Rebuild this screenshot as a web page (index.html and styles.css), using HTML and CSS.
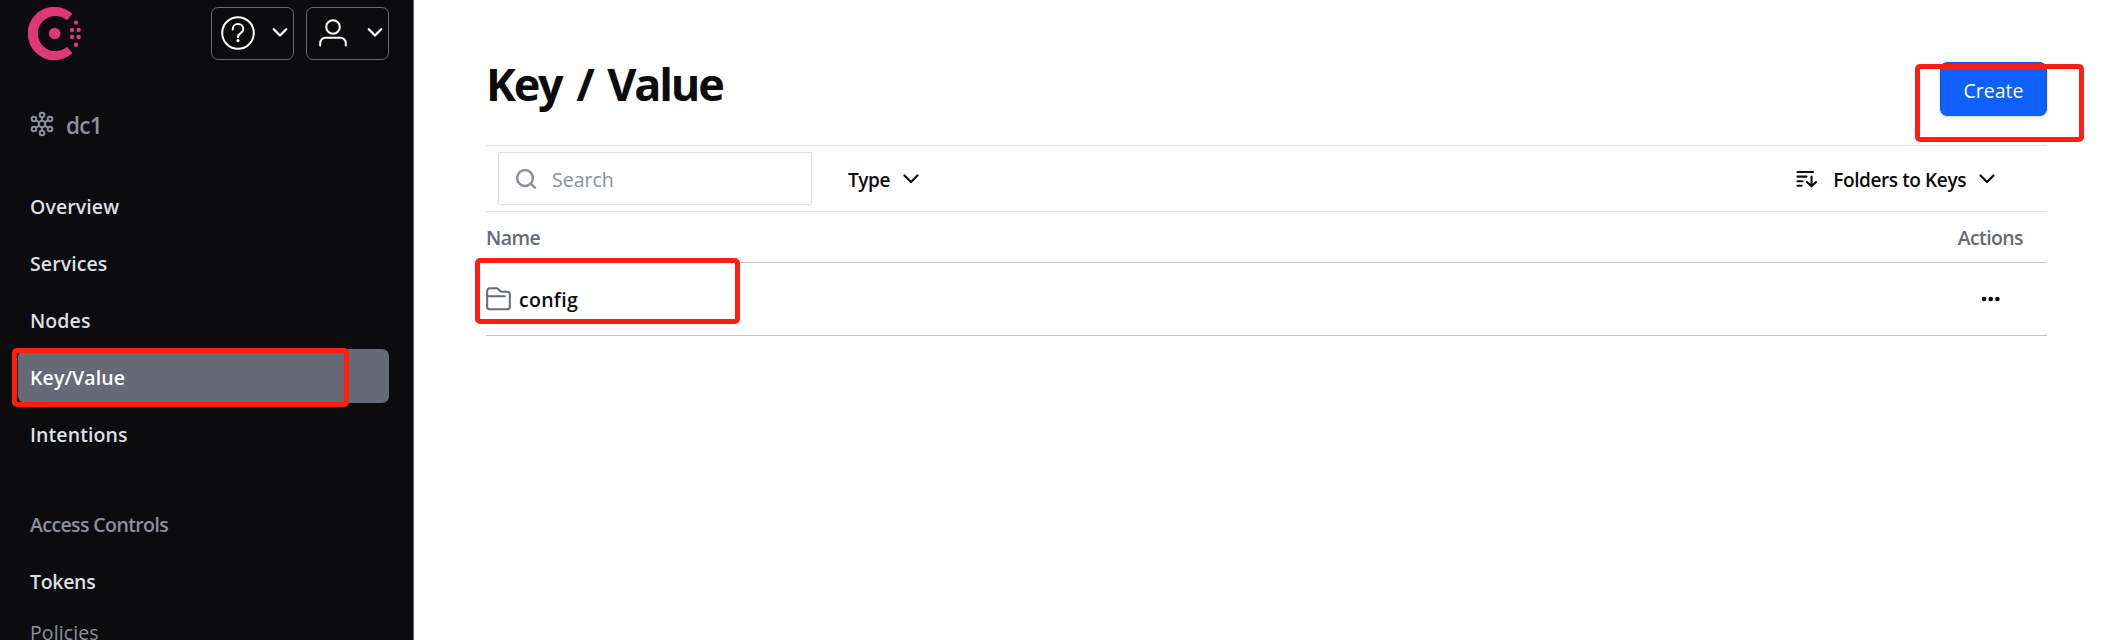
FILE: index.html
```
<!DOCTYPE html>
<html lang="en">
<head>
    <meta charset="UTF-8">
    <meta name="viewport" content="width=device-width, initial-scale=1.0">
    <title>Key / Value - Consul</title>
    <link rel="stylesheet" href="styles.css">
</head>
<body>
    <aside class="sidebar">
        <header class="top">
            <svg class="logo" width="54" height="54" viewBox="0 0 54 54" fill="#e03875">
                <path d="M44.3 6.7A26.7 26.7 0 1 0 44.3 46.3L39 39.8A17.6 17.6 0 1 1 39 13.2Z"/>
                <circle cx="26.7" cy="26.5" r="5.8"/>
                <circle cx="48" cy="15.6" r="2.2"/>
                <circle cx="44" cy="23" r="2.2"/>
                <circle cx="50.6" cy="23" r="2.2"/>
                <circle cx="44" cy="30" r="2.2"/>
                <circle cx="50.6" cy="30" r="2.2"/>
                <circle cx="48" cy="37.8" r="2.2"/>
            </svg>
            <div class="top-buttons">
                <button class="top-btn">
                    <svg width="81" height="51" viewBox="0 0 81 51" fill="none" stroke="#fff" stroke-width="2" stroke-linecap="round" stroke-linejoin="round">
                        <circle cx="26" cy="25" r="15.8"/>
                        <path d="M20.7 21.5c0-3 2.2-5.4 5.3-5.4s5.3 2.1 5.3 4.9c0 4.4-5.3 3.9-5.3 8.2"/>
                        <circle cx="26" cy="32.6" r="1.6" fill="#fff" stroke="none"/>
                        <path d="M61.8 21.3l6.2 6.2 6.2-6.2" stroke-width="2.3"/>
                    </svg>
                </button>
                <button class="top-btn">
                    <svg width="81" height="51" viewBox="0 0 81 51" fill="none" stroke="#fff" stroke-width="2" stroke-linecap="round" stroke-linejoin="round">
                        <circle cx="26" cy="19" r="6.8"/>
                        <path d="M13.2 37.5v-2.3a5.5 5.5 0 0 1 5.5-5.5h14.6a5.5 5.5 0 0 1 5.5 5.5v2.3"/>
                        <path d="M61.8 21.3l6.2 6.2 6.2-6.2" stroke-width="2.3"/>
                    </svg>
                </button>
            </div>
        </header>

        <div class="dc">
            <svg width="24" height="26" viewBox="0 0 24 26" fill="none" stroke="#8c909c" stroke-width="2">
                <circle cx="12" cy="13" r="3.3"/>
                <circle cx="12" cy="4" r="2.3"/>
                <circle cx="12" cy="22" r="2.3"/>
                <circle cx="4" cy="8" r="2.3"/>
                <circle cx="20" cy="8" r="2.3"/>
                <circle cx="4" cy="18" r="2.3"/>
                <circle cx="20" cy="18" r="2.3"/>
                <path d="M12 6.3v3.4M12 16.3v3.4M6 9.3l3 1.9M18 9.3l-3 1.9M6 16.7l3-1.9M18 16.7l-3-1.9"/>
            </svg>
            <span>dc1</span>
        </div>

        <ul class="nav">
            <li><a href="#">Overview</a></li>
            <li><a href="#">Services</a></li>
            <li><a href="#">Nodes</a></li>
            <li class="active"><a href="#">Key/Value</a></li>
            <li><a href="#">Intentions</a></li>
        </ul>
        <ul class="nav access">
            <li class="nav-title">Access Controls</li>
            <li class="tokens"><a href="#">Tokens</a></li>
            <li class="disabled">Policies</li>
        </ul>
        <div class="mark mark-nav"></div>
    </aside>

    <main class="content">
        <div class="heading">
            <h1>Key / Value</h1>
            <button class="create">Create</button>
        </div>

        <div class="filters">
            <div class="search">
                <svg width="22" height="22" viewBox="0 0 22 22" fill="none" stroke="#8c909c" stroke-width="2.5" stroke-linecap="round">
                    <circle cx="10" cy="10" r="7.9"/>
                    <path d="M15.7 15.7l4.3 4"/>
                </svg>
                <span>Search</span>
            </div>
            <div class="menu">
                <span>Type</span>
                <svg width="16" height="10" viewBox="0 0 16 10" fill="none" stroke="#0c0c0e" stroke-width="2.2" stroke-linecap="round" stroke-linejoin="round">
                    <path d="M1.5 1.5L8 8l6.5-6.5"/>
                </svg>
            </div>
            <div class="menu sort">
                <svg class="sort-icon" width="22" height="18" viewBox="0 0 22 18" fill="none" stroke="#0c0c0e" stroke-width="2.1" stroke-linecap="round" stroke-linejoin="round">
                    <path d="M1.5 2h15.5M1.5 6.6h9M1.5 11.2h5M1.5 15.8h4M15.5 6.5v9.5M10.9 12l4.6 4.3 4.6-4.3"/>
                </svg>
                <span>Folders to Keys</span>
                <svg width="16" height="10" viewBox="0 0 16 10" fill="none" stroke="#0c0c0e" stroke-width="2.2" stroke-linecap="round" stroke-linejoin="round">
                    <path d="M1.5 1.5L8 8l6.5-6.5"/>
                </svg>
            </div>
        </div>

        <div class="row row-head">
            <span>Name</span>
            <span>Actions</span>
        </div>
        <div class="row">
            <a class="key" href="#">
                <svg width="26" height="24" viewBox="0 0 26 24" fill="none" stroke="#656a76" stroke-width="2" stroke-linecap="round" stroke-linejoin="round">
                    <path d="M1.2 20V3.8a2.5 2.5 0 0 1 2.5-2.5h6.6a3 3 0 0 1 2.3 1l1.3 1.4a3 3 0 0 0 2.2 1h5.2a2.5 2.5 0 0 1 2.5 2.5V20a2.3 2.3 0 0 1-2.3 2.3h-18A2.3 2.3 0 0 1 1.2 20z"/>
                    <path d="M1.2 9.2h17.8"/>
                </svg>
                <span>config</span>
            </a>
            <svg class="dots" width="20" height="6" viewBox="0 0 20 6" fill="#0c0c0e">
                <circle cx="3" cy="3" r="2.3"/>
                <circle cx="9.7" cy="3" r="2.3"/>
                <circle cx="16.4" cy="3" r="2.3"/>
            </svg>
        </div>
        <div class="mark mark-create"></div>
        <div class="mark mark-config"></div>
    </main>
</body>
</html>
```
FILE: styles.css
```
* {
    box-sizing: border-box;
}

body {
    margin: 0;
    height: 640px;
    display: flex;
    overflow: hidden;
    background: #fff;
    color: #0c0c0e;
    font-family: "Open Sans", "Noto Sans", sans-serif;
    font-size: 19.5px;
    line-height: 28px;
}

svg {
    display: block;
    flex: none;
}

button {
    font: inherit;
    padding: 0;
    cursor: pointer;
}

a {
    color: inherit;
    text-decoration: none;
}

/* sidebar */
.sidebar {
    width: 414px;
    flex: none;
    padding: 7px 24px 0 18px;
    background: #0c0c0e;
    border-right: 1px solid #656a76;
}

.top {
    display: flex;
    justify-content: space-between;
    padding-left: 10px;
}

.top-buttons {
    display: flex;
    gap: 12px;
}

.top-btn {
    width: 83px;
    height: 53px;
    border: 1px solid #656a76;
    border-radius: 7px;
    background: transparent;
}

.dc {
    display: flex;
    align-items: center;
    gap: 12px;
    height: 30px;
    margin: 49px 0 38px;
    padding-left: 12px;
    color: #8c909c;
    font-size: 22.5px;
    font-weight: 600;
    letter-spacing: -0.7px;
}

.dc svg {
    margin-top: -3px;
}

.dc span {
    padding-top: 1px;
}

.nav {
    list-style: none;
    margin: 0;
    padding: 0;
    display: flex;
    flex-direction: column;
    gap: 3px;
    color: #dedfe3;
    font-weight: 600;
    letter-spacing: 0.1px;
}

.nav li {
    height: 54px;
    padding: 14.6px 12px 0;
    border-radius: 7px;
}

.nav .active {
    background: #656a76;
    color: #fff;
}

.access {
    margin-top: 37px;
}

.nav .nav-title {
    padding-top: 13.5px;
    color: #8c909c;
    letter-spacing: -0.6px;
}

.nav .tokens {
    padding-top: 14px;
    letter-spacing: -0.3px;
}

.nav .disabled {
    padding-top: 8px;
    color: #8c909c;
    font-weight: 400;
}

/* main */
.content {
    width: 1633px;
    padding: 62px 0 0 72px;
}

.heading {
    display: flex;
    justify-content: space-between;
    height: 83px;
}

h1 {
    margin: -8px 0 0;
    font-size: 45px;
    line-height: 60px;
    font-weight: 700;
    letter-spacing: -2.2px;
    word-spacing: 5.2px;
}

.create {
    width: 107px;
    height: 54px;
    padding-top: 3px;
    border: 1px solid #0c56e9;
    border-radius: 7px;
    background: #1060ff;
    box-shadow: 0 2px 3px rgba(101, 106, 118, 0.2);
    color: #fff;
}

.filters {
    display: flex;
    align-items: center;
    height: 67px;
    padding: 0 52px 0 12px;
    border-top: 1px solid #dedfe3;
    border-bottom: 1px solid #dedfe3;
    font-weight: 600;
}

.search {
    display: flex;
    align-items: center;
    gap: 15px;
    width: 314px;
    height: 53px;
    padding-left: 16px;
    border: 1px solid #dedfe3;
    border-radius: 2px;
    color: #8c909c;
    font-weight: 400;
}

.search span,
.menu span {
    padding-top: 2px;
}

.menu {
    display: flex;
    align-items: center;
    gap: 13px;
    margin-left: 36px;
    font-size: 19px;
    letter-spacing: -0.4px;
}

.sort {
    margin-left: auto;
}

.sort-icon {
    margin-right: 2px;
}

.row {
    display: flex;
    align-items: center;
    justify-content: space-between;
    height: 73px;
    border-bottom: 1px solid #c2c5cb;
}

.row-head {
    height: 51px;
    padding: 2px 24px 0 0;
    color: #656a76;
    font-weight: 600;
    letter-spacing: -0.6px;
}

.key {
    display: flex;
    align-items: center;
    gap: 7px;
    font-weight: 600;
    letter-spacing: 0.3px;
}

.key span {
    padding-top: 2px;
}

.dots {
    margin-right: 46px;
}

/* red highlight boxes */
.mark {
    position: absolute;
    border: 5px solid #ff1e10;
    border-radius: 5px;
}

.mark-nav {
    left: 12px;
    top: 347.5px;
    width: 337px;
    height: 59px;
}

.mark-create {
    left: 1915px;
    top: 64px;
    width: 169px;
    height: 78px;
}

.mark-config {
    left: 475px;
    top: 258px;
    width: 265px;
    height: 66px;
}
```
